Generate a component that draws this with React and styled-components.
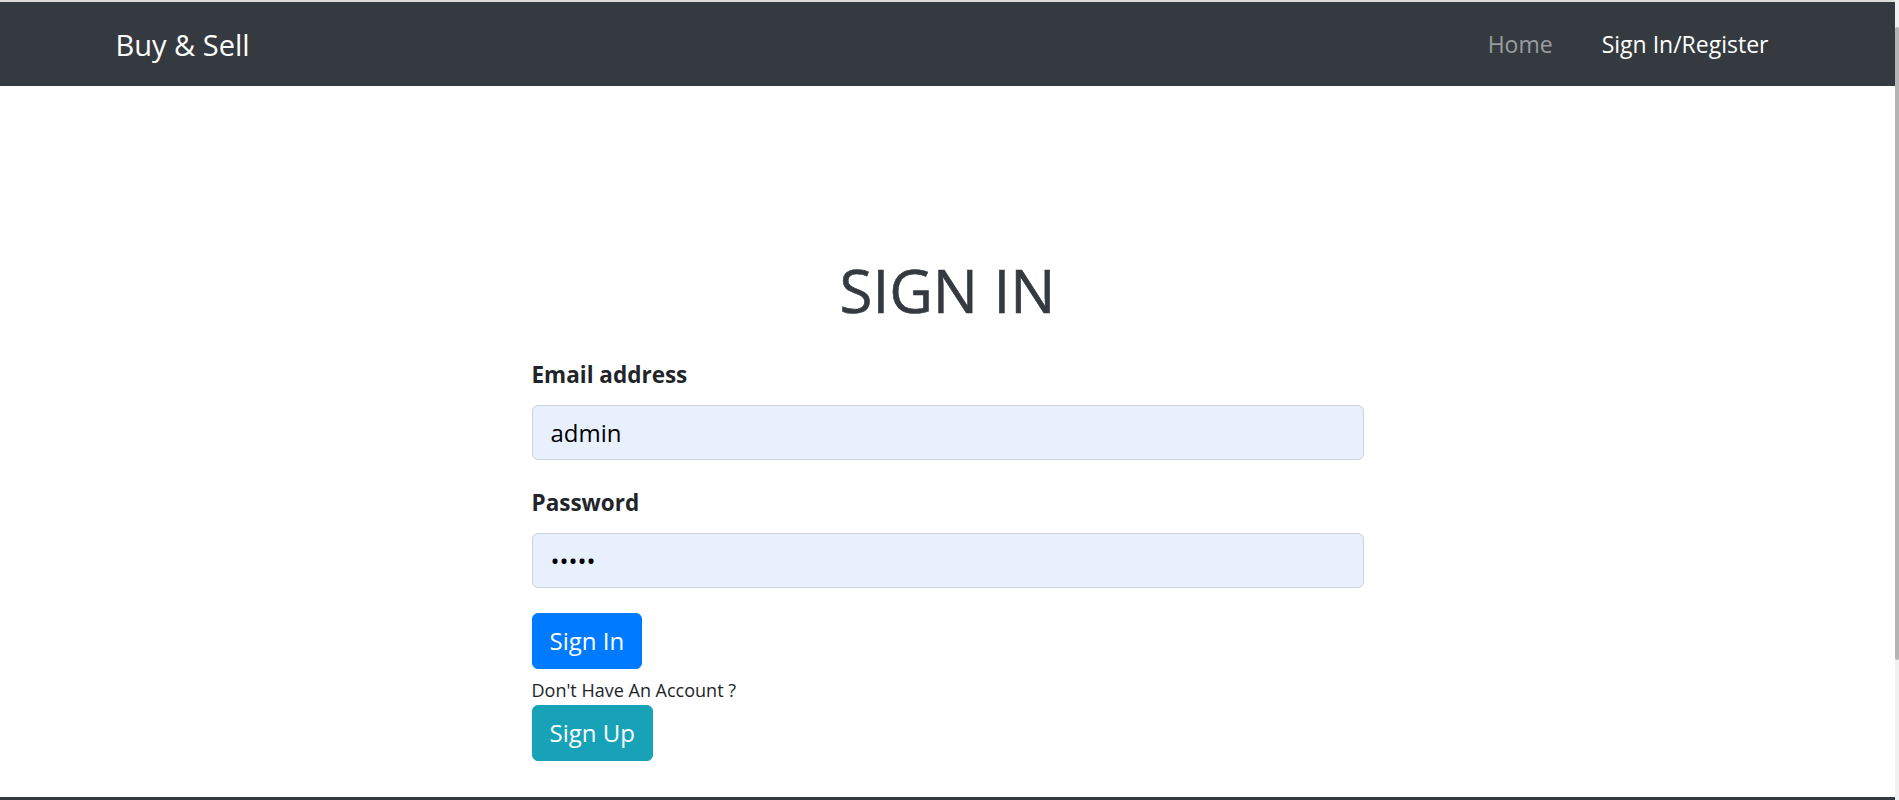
import React from 'react';
import styled, { createGlobalStyle } from 'styled-components';

const GlobalStyle = createGlobalStyle`
  * {
    box-sizing: border-box;
  }
  html, body {
    margin: 0;
    padding: 0;
    background: #ffffff;
    overflow: hidden;
  }
  body {
    font-family: 'Open Sans', 'Noto Sans', sans-serif;
    color: #212529;
  }
`;

const Window = styled.div`
  display: flex;
  width: 1899px;
  height: 800px;
`;

const Page = styled.div`
  flex: 1;
  display: flex;
  flex-direction: column;
  min-width: 0;
`;

const TopStrip = styled.div`
  height: 2px;
  background: #dcdcdc;
`;

const Navbar = styled.nav`
  height: 84px;
  background: #343a40;
  display: flex;
  align-items: center;
`;

const NavContainer = styled.div`
  width: 1710px;
  margin: 0 auto;
  padding: 0 22px 0 23px;
  display: flex;
  align-items: center;
  justify-content: space-between;
`;

const Brand = styled.a`
  font-size: 29px;
  line-height: 45px;
  color: #ffffff;
  text-decoration: none;
  cursor: pointer;
`;

const NavLinks = styled.div`
  display: flex;
  align-items: center;
  gap: 25px;
`;

const NavLink = styled.a`
  font-size: 23px;
  line-height: 36px;
  padding: 9px 12px;
  color: ${(p) => (p.$muted ? 'rgba(255, 255, 255, 0.5)' : '#ffffff')};
  text-decoration: none;
  cursor: pointer;
`;

const Main = styled.main`
  flex: 1;
  padding-top: 168px;
`;

const Form = styled.form`
  width: 832px;
  margin: 0 auto;
  display: flex;
  flex-direction: column;
`;

const Title = styled.h1`
  margin: 0 0 31px;
  font-size: 60px;
  line-height: 72px;
  font-weight: 500;
  color: #343a40;
  text-align: center;
  -webkit-text-stroke: 0.6px #343a40;
`;

const Group = styled.div`
  display: flex;
  flex-direction: column;
  margin-bottom: 25px;
`;

const Label = styled.label`
  font-size: 22.5px;
  line-height: 36px;
  font-weight: 700;
  color: #212529;
  margin-bottom: 12px;
`;

const Input = styled.input`
  height: 55px;
  width: 100%;
  padding: 0 18px;
  font-family: 'Open Sans', 'Noto Sans', sans-serif;
  font-size: 24px;
  color: #000000;
  background: #e8f0fe;
  border: 1px solid #cbd3de;
  border-radius: 6px;
  outline: none;
`;

const Button = styled.button`
  align-self: flex-start;
  font-family: 'Open Sans', 'Noto Sans', sans-serif;
  font-size: 24px;
  line-height: 36px;
  padding: 9px 17px;
  color: #ffffff;
  background: ${(p) => p.$bg};
  border: 1px solid ${(p) => p.$bg};
  border-radius: 6px;
  cursor: pointer;
`;

const Hint = styled.p`
  margin: 6px 0 0;
  font-size: 18px;
  line-height: 30px;
  color: #212529;
`;

const Footer = styled.footer`
  height: 3px;
  background: #343a40;
`;

const Scrollbar = styled.div`
  width: 4px;
  background: #f1f1f1;
  display: flex;
  flex-direction: column;
  padding-top: 27px;
`;

const Thumb = styled.div`
  height: 633px;
  background: #b4b4b4;
  border-radius: 2px;
`;

export default function App() {
  return (
    <>
      <GlobalStyle />
      <Window>
        <Page>
          <TopStrip />
          <Navbar>
            <NavContainer>
              <Brand>Buy &amp; Sell</Brand>
              <NavLinks>
                <NavLink $muted>Home</NavLink>
                <NavLink>Sign In/Register</NavLink>
              </NavLinks>
            </NavContainer>
          </Navbar>
          <Main>
            <Form onSubmit={(e) => e.preventDefault()}>
              <Title>SIGN IN</Title>
              <Group>
                <Label htmlFor="email">Email address</Label>
                <Input id="email" type="text" defaultValue="admin" />
              </Group>
              <Group>
                <Label htmlFor="password">Password</Label>
                <Input id="password" type="password" defaultValue="admin" />
              </Group>
              <Button type="submit" $bg="#007bff">Sign In</Button>
              <Hint>Don't Have An Account ?</Hint>
              <Button type="button" $bg="#17a2b8">Sign Up</Button>
            </Form>
          </Main>
          <Footer />
        </Page>
        <Scrollbar>
          <Thumb />
        </Scrollbar>
      </Window>
    </>
  );
}
